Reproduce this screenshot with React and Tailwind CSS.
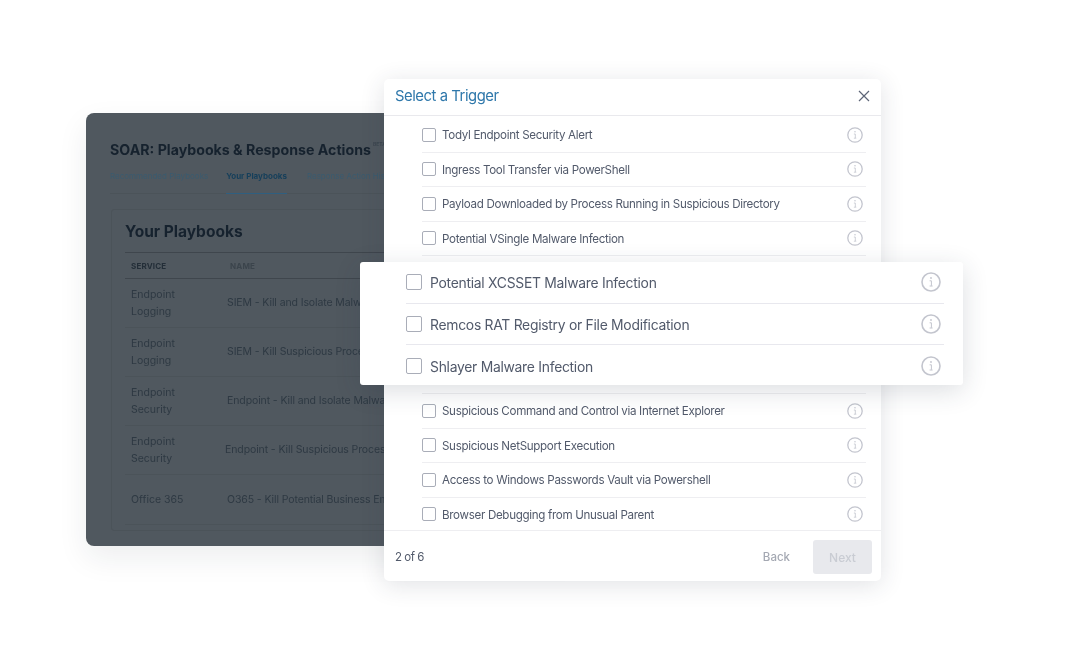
const font = { fontFamily: 'Inter, "Noto Sans", sans-serif' };

function InfoIcon({ size, color = "#c3c5ce" }) {
  return (
    <svg width={size} height={size} viewBox="0 0 20 20" fill="none" className="shrink-0">
      <circle cx="10" cy="10" r="9" stroke={color} strokeWidth="1.6" />
      <circle cx="10" cy="6" r="0.9" fill={color} />
      <path d="M8.6 8.8H10.4V13.8M8.6 14H11.6" stroke={color} strokeWidth="1" />
    </svg>
  );
}

function Row({ label, last }) {
  return (
    <div className={`flex h-[34.5px] items-center border-b ${last ? "border-transparent" : "border-[#eeeef1]"}`}>
      <span className="h-[14px] w-[14px] shrink-0 rounded-[2px] border border-[#a9adb8] bg-white" />
      <span className="ml-[6px] flex-1 whitespace-nowrap pt-[2px] text-[11.6px] tracking-[-0.028em] text-[#525a6b]">{label}</span>
      <span className="mr-[3px]"><InfoIcon size={16} /></span>
    </div>
  );
}

function BigRow({ label, last }) {
  return (
    <div className={`flex h-[41.7px] items-center ${last ? "" : "border-b border-[#e8e8ee]"}`}>
      <span className="h-[16px] w-[16px] shrink-0 rounded-[2px] border border-[#a9adb8] bg-white" />
      <span className="ml-[8px] flex-1 whitespace-nowrap pt-[2px] text-[13.9px] tracking-[-0.02em] text-[#525a6b]">{label}</span>
      <span className="mr-[3px]"><InfoIcon size={20} /></span>
    </div>
  );
}

function TableRow({ service, name, h, nameOffset = 0 }) {
  return (
    <div className={`flex items-center border-b border-[#4b5359] ${h}`}>
      <div className="w-[102px] shrink-0 pl-[6px] text-[10.5px] leading-[17.5px] text-[#2e3943]">{service}</div>
      <div className="whitespace-nowrap text-[10.5px] tracking-[-0.01em] text-[#2e3943]" style={{ marginLeft: nameOffset }}>{name}</div>
    </div>
  );
}

export default function App() {
  return (
    <div className="relative h-[660px] w-[1080px] overflow-hidden bg-white" style={font}>
      {/* Dimmed page behind */}
      <div className="absolute left-[86px] top-[113px] h-[433px] w-[500px] overflow-hidden rounded-lg bg-[#50585f] shadow-[0_12px_30px_rgba(30,40,50,0.08)] blur-[0.4px]">
        <div className="pl-[24px] pt-[28px]">
          <div className="flex items-start whitespace-nowrap">
            <span className="text-[14.2px] font-bold leading-[18px] text-[#16222e]">SOAR: Playbooks &amp; Response Actions</span>
            <span className="ml-[2px] text-[5px] font-bold text-[#3b454e]">BETA</span>
          </div>
          <div className="mt-[11px] flex h-[24px] w-[450px] whitespace-nowrap border-b border-[#4b5359] text-[8px] text-[#3a5b6f]">
            <span>Recommended Playbooks</span>
            <span className="ml-[18px] h-[24px] border-b border-[#2f5f80] font-bold text-[#153f5b]">Your Playbooks</span>
            <span className="ml-[20px]">Response Action History</span>
          </div>
          <div className="ml-[1px] mt-[15px] h-[322px] w-[440px] rounded-[3px] border border-[#4b5359] pl-[13px] pt-[12px]">
            <div className="text-[15.5px] font-bold leading-[20px] text-[#16222e]">Your Playbooks</div>
            <div className="mt-[10px] flex h-[27px] items-center border-y border-[#3f464d] text-[8px] font-bold tracking-[0.02em]">
              <span className="w-[105px] pl-[6px] text-[#232e38]">SERVICE</span>
              <span className="text-[#3b444c]">NAME</span>
            </div>
            <TableRow service={<>Endpoint<br />Logging</>} name="SIEM - Kill and Isolate Malware Host" h="h-[49px]" />
            <TableRow service={<>Endpoint<br />Logging</>} name="SIEM - Kill Suspicious Process" h="h-[49px]" />
            <TableRow service={<>Endpoint<br />Security</>} name="Endpoint - Kill and Isolate Malware Host" h="h-[49px]" />
            <TableRow service={<>Endpoint<br />Security</>} name="Endpoint - Kill Suspicious Process" h="h-[49px]" nameOffset={-2} />
            <TableRow service="Office 365" name="O365 - Kill Potential Business Email Compromise" h="h-[50px]" />
          </div>
        </div>
      </div>

      {/* Modal */}
      <div className="absolute left-[384px] top-[79px] flex h-[502px] w-[497px] flex-col rounded-[5px] bg-white shadow-[0_4px_24px_rgba(40,50,70,0.14)] blur-[0.3px]">
        <div className="flex h-[37px] shrink-0 items-center justify-between border-b border-[#e9e9ed] pb-[2px] pl-[11px] pr-[10px]">
          <span className="text-[14.8px] tracking-[-0.03em] text-[#2f78ab]">Select a Trigger</span>
          <svg width="14" height="14" viewBox="0 0 14 14" fill="none">
            <path d="M2 2L12 12M12 2L2 12" stroke="#5d6577" strokeWidth="1.2" />
          </svg>
        </div>
        <div className="h-[415px] shrink-0 overflow-hidden border-b border-[#eeeef1] pl-[38px] pr-[15px] pt-[2px]">
          <Row label="Todyl Endpoint Security Alert" />
          <Row label="Ingress Tool Transfer via PowerShell" />
          <Row label="Payload Downloaded by Process Running in Suspicious Directory" />
          <Row label="Potential VSingle Malware Infection" />
          <div className="h-[138px] border-b border-[#eeeef1]" />
          <Row label="Suspicious Command and Control via Internet Explorer" />
          <Row label="Suspicious NetSupport Execution" />
          <Row label="Access to Windows Passwords Vault via Powershell" />
          <Row label="Browser Debugging from Unusual Parent" last />
        </div>
        <div className="flex flex-1 items-center justify-between pl-[11px] pr-[9px] pt-[2px]">
          <span className="pt-[2px] text-[11.5px] tracking-[-0.04em] text-[#525a6b]">2 of 6</span>
          <div className="flex items-center gap-[23px]">
            <span className="pt-[2px] text-[11.5px] font-medium text-[#a4a8b2]">Back</span>
            <span className="flex h-[34px] w-[59px] items-center justify-center rounded-[3px] bg-[#e8e9ed] pt-[1px] text-[12px] font-medium text-[#c9ccd3]">Next</span>
          </div>
        </div>
      </div>

      {/* Zoomed rows */}
      <div className="absolute left-[360px] top-[262px] h-[123px] w-[603px] rounded-[3px] bg-white pl-[46px] pr-[19px] shadow-[0_6px_26px_rgba(40,50,70,0.16)] blur-[0.3px]">
        <BigRow label="Potential XCSSET Malware Infection" />
        <BigRow label="Remcos RAT Registry or File Modification" />
        <BigRow label="Shlayer Malware Infection" last />
      </div>
    </div>
  );
}
